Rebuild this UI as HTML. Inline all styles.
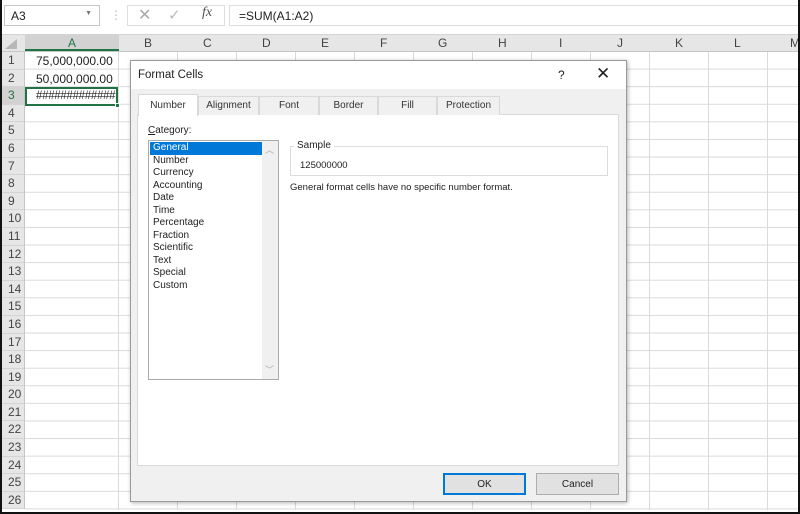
<!DOCTYPE html>
<html><head><style>
*{box-sizing:border-box;margin:0;padding:0}
body{width:800px;height:514px;overflow:hidden;background:#fff;font-family:"Liberation Sans",sans-serif;position:relative;font-size:11px;color:#222}
.a{position:absolute}
#frame{left:0;top:0;width:800px;height:514px;border:2px solid #111;border-top:none;z-index:50;pointer-events:none}
.grid{left:118px;top:52px;width:682px;height:458px;
background-image:linear-gradient(#dadada 1px,transparent 1px),linear-gradient(90deg,#dadada 1px,transparent 1px);
background-size:100% 17.6px,59px 100%;background-position:0 -1px,0 0}
.gridA{left:25px;top:52px;width:93px;height:458px;
background-image:linear-gradient(#dadada 1px,transparent 1px);background-size:100% 17.6px;background-position:0 -1px}
.rh{left:2px;top:52px;width:23px;background:#e6e6e6;border-right:1px solid #c6c6c6}
.rh div{height:17.6px;line-height:17.6px;padding-left:6px;font-size:12px;color:#444;border-bottom:1px solid #d4d4d4}
.ch{left:2px;top:35px;height:17px;width:798px;background:#e6e6e6;border-bottom:1px solid #c6c6c6}
.ch span{position:absolute;top:1px;font-size:12px;color:#444}
.dlg{left:130px;top:60px;width:497px;height:442px;background:#f0f0f0;border:1px solid #9a9a9a;box-shadow:1px 1px 4px rgba(0,0,0,.3)}
.tab{position:absolute;top:35px;height:19px;border:1px solid #d9d9d9;border-bottom:none;background:#f0f0f0;text-align:center;font-size:10px;line-height:18px;color:#333}
.li{height:12.5px;line-height:12.5px;padding-left:3px;font-size:10px}
.btn{position:absolute;top:412px;height:22px;width:83px;background:#e1e1e1;border:1px solid #adadad;text-align:center;line-height:22px;font-size:10px}
</style></head><body>
<div class="a" style="left:0;top:0;width:800px;height:35px;background:#fff;border-bottom:1px solid #d4d4d4"></div>
<div class="a" style="left:4px;top:5px;width:96px;height:21px;border:1px solid #c6c6c6;font-size:12px;padding:3px 6px">A3<span style="position:absolute;right:7px;top:4px;font-size:7px;color:#777">▼</span></div>
<div class="a" style="left:110px;top:8px;color:#bbb;font-size:12px">⋮</div>
<div class="a" style="left:127px;top:5px;width:98px;height:21px;border:1px solid #dedede"></div>
<div class="a" style="left:138px;top:5px;color:#aaa;font-size:16px">✕</div>
<div class="a" style="left:168px;top:6px;color:#bbb;font-size:15px">✓</div>
<div class="a" style="left:202px;top:5px;color:#555;font-size:14px;font-style:italic;font-family:'Liberation Serif',serif">fx</div>
<div class="a" style="left:229px;top:5px;width:571px;height:21px;border:1px solid #dedede;font-size:12px;padding:3px 9px">=SUM(A1:A2)</div>
<div class="a ch">
<span style="left:3px;top:4px;width:0;height:0;border-left:12px solid transparent;border-bottom:10px solid #b7b7b7;position:absolute"></span>
<div style="position:absolute;left:23px;top:0;width:94px;height:16px;background:#d2d2d2;border-bottom:2px solid #217346"></div>
<span style="left:66px;color:#217346">A</span><span style="left:142px">B</span><span style="left:201px">C</span><span style="left:260px">D</span><span style="left:319px">E</span><span style="left:378px">F</span><span style="left:436px">G</span><span style="left:496px">H</span><span style="left:557px">I</span><span style="left:615px">J</span><span style="left:673px">K</span><span style="left:732px">L</span><span style="left:788px">M</span>
</div>
<div class="a gridA"></div>
<div class="a grid"></div>
<div class="a rh">
<div>1</div><div>2</div><div style="background:#d2d2d2;color:#217346">3</div><div>4</div><div>5</div><div>6</div><div>7</div><div>8</div><div>9</div><div>10</div><div>11</div><div>12</div><div>13</div><div>14</div><div>15</div><div>16</div><div>17</div><div>18</div><div>19</div><div>20</div><div>21</div><div>22</div><div>23</div><div>24</div><div>25</div><div>26</div>
</div>
<div class="a" style="left:36px;top:54px;font-size:12px">75,000,000.00</div>
<div class="a" style="left:36px;top:72px;font-size:12px">50,000,000.00</div>
<div class="a" style="left:25px;top:87px;width:93px;height:19px;border:2px solid #217346;font-size:11.5px;padding:1px 0 0 9px;background:#fff;letter-spacing:-.3px;overflow:hidden;white-space:nowrap">#############</div>
<div class="a" style="left:115px;top:103px;width:5px;height:5px;background:#217346;border:1px solid #fff"></div>
<div class="a dlg">
<div class="a" style="left:0;top:0;width:495px;height:28px;background:#fff"></div>
<div class="a" style="left:7px;top:8px;font-size:11.5px">Format Cells</div>
<div class="a" style="left:427px;top:7px;font-size:12px">?</div>
<div class="a" style="left:465px;top:3px;font-size:17px;font-weight:300">✕</div>
<div class="a" style="left:6px;top:53px;width:482px;height:352px;background:#fff;border:1px solid #d9d9d9"></div>
<div class="tab" style="left:7px;top:33px;width:60px;height:22px;background:#fff;line-height:22px">Number</div>
<div class="tab" style="left:67px;width:61px">Alignment</div>
<div class="tab" style="left:128px;width:60px">Font</div>
<div class="tab" style="left:188px;width:59px">Border</div>
<div class="tab" style="left:247px;width:59px">Fill</div>
<div class="tab" style="left:306px;width:63px">Protection</div>
<div class="a" style="left:17px;top:64px;font-size:10px"><u>C</u>ategory:</div>
<div class="a" style="left:17px;top:79px;width:131px;height:240px;background:#fff;border:1px solid #aaa;padding:1px">
<div class="a" style="right:0;top:0;width:16px;height:238px;background:#f0f0f0"></div>
<div class="a" style="right:4px;top:2px;color:#aaa;font-size:9px">︿</div>
<div class="a" style="right:4px;bottom:3px;color:#aaa;font-size:9px">﹀</div>
<div class="li" style="background:#0078d7;color:#fff;width:112px">General</div>
<div class="li">Number</div><div class="li">Currency</div><div class="li">Accounting</div><div class="li">Date</div><div class="li">Time</div><div class="li">Percentage</div><div class="li">Fraction</div><div class="li">Scientific</div><div class="li">Text</div><div class="li">Special</div><div class="li">Custom</div>
</div>
<div class="a" style="left:159px;top:85px;width:318px;height:30px;border:1px solid #dcdcdc"></div>
<div class="a" style="left:163px;top:79px;font-size:10px;background:#fff;padding:0 3px">Sample</div>
<div class="a" style="left:169px;top:99px;font-size:9.5px">125000000</div>
<div class="a" style="left:159px;top:121px;font-size:9.5px">General format cells have no specific number format.</div>
<div class="btn" style="left:312px;border:2px solid #0078d7;line-height:20px">OK</div>
<div class="btn" style="left:405px">Cancel</div>
</div>
<div class="a" id="frame"></div>
</body></html>
